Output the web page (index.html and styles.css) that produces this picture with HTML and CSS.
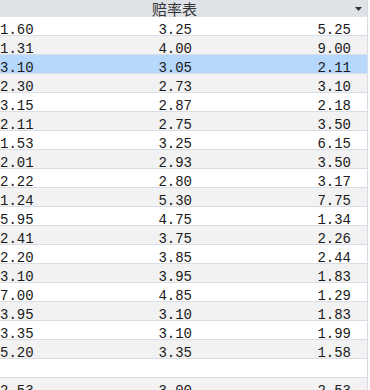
FILE: index.html
```html
<!DOCTYPE html>
<html>
<head>
<meta charset="utf-8">
<link rel="stylesheet" href="styles.css">
</head>
<body>
<div class="table">
  <div class="header">
    <div class="title">赔率表</div>
    <div class="drop"><svg width="7" height="5" viewBox="0 0 7 5"><path d="M0 0H7L3.5 4Z" fill="#333"/></svg></div>
  </div>
  <div class="row"><span class="c1">1.60</span><span class="c2">3.25</span><span class="c3">5.25</span></div>
  <div class="row alt"><span class="c1">1.31</span><span class="c2">4.00</span><span class="c3">9.00</span></div>
  <div class="row sel"><span class="c1">3.10</span><span class="c2">3.05</span><span class="c3">2.11</span></div>
  <div class="row alt"><span class="c1">2.30</span><span class="c2">2.73</span><span class="c3">3.10</span></div>
  <div class="row"><span class="c1">3.15</span><span class="c2">2.87</span><span class="c3">2.18</span></div>
  <div class="row alt"><span class="c1">2.11</span><span class="c2">2.75</span><span class="c3">3.50</span></div>
  <div class="row"><span class="c1">1.53</span><span class="c2">3.25</span><span class="c3">6.15</span></div>
  <div class="row alt"><span class="c1">2.01</span><span class="c2">2.93</span><span class="c3">3.50</span></div>
  <div class="row"><span class="c1">2.22</span><span class="c2">2.80</span><span class="c3">3.17</span></div>
  <div class="row alt"><span class="c1">1.24</span><span class="c2">5.30</span><span class="c3">7.75</span></div>
  <div class="row"><span class="c1">5.95</span><span class="c2">4.75</span><span class="c3">1.34</span></div>
  <div class="row alt"><span class="c1">2.41</span><span class="c2">3.75</span><span class="c3">2.26</span></div>
  <div class="row"><span class="c1">2.20</span><span class="c2">3.85</span><span class="c3">2.44</span></div>
  <div class="row alt"><span class="c1">3.10</span><span class="c2">3.95</span><span class="c3">1.83</span></div>
  <div class="row"><span class="c1">7.00</span><span class="c2">4.85</span><span class="c3">1.29</span></div>
  <div class="row alt"><span class="c1">3.95</span><span class="c2">3.10</span><span class="c3">1.83</span></div>
  <div class="row"><span class="c1">3.35</span><span class="c2">3.10</span><span class="c3">1.99</span></div>
  <div class="row alt"><span class="c1">5.20</span><span class="c2">3.35</span><span class="c3">1.58</span></div>
  <div class="row"><span class="c1"></span><span class="c2"></span><span class="c3"></span></div>
  <div class="row alt"><span class="c1">2.53</span><span class="c2">3.00</span><span class="c3">2.53</span></div>
</div>
</body>
</html>
```

FILE: styles.css
```css
html, body {
  margin: 0;
  padding: 0;
  background: #ffffff;
  overflow: hidden;
}
.table {
  width: 367px;
  border-right: 1px solid #d6dbe3;
  height: 400px;
}
.header {
  display: flex;
  height: 17px;
  background: #dfe3e8;
}
.title {
  flex: 1;
  text-align: center;
  font-family: "Noto Sans CJK SC", sans-serif;
  font-size: 15px;
  line-height: 17px;
  color: #333;
}
.drop {
  width: 18px;
  display: flex;
  justify-content: center;
  padding-top: 7px;
  box-sizing: border-box;
}
.drop svg { display: block; }
.row {
  display: grid;
  grid-template-columns: 96px 96px 159px;
  height: 14px;
  padding-top: 4px;
  border-bottom: 1px solid #d8dde6;
  background: #ffffff;
  font-family: "Liberation Mono", monospace;
  font-size: 14px;
  line-height: 18px;
  color: #1a1a1a;
  white-space: nowrap;
}
.row.alt { background: #f2f2f2; }
.row.sel { background: #b5d8fc; }
.c1 { text-align: left; }
.c2 { text-align: right; }
.c3 { text-align: right; }
```
